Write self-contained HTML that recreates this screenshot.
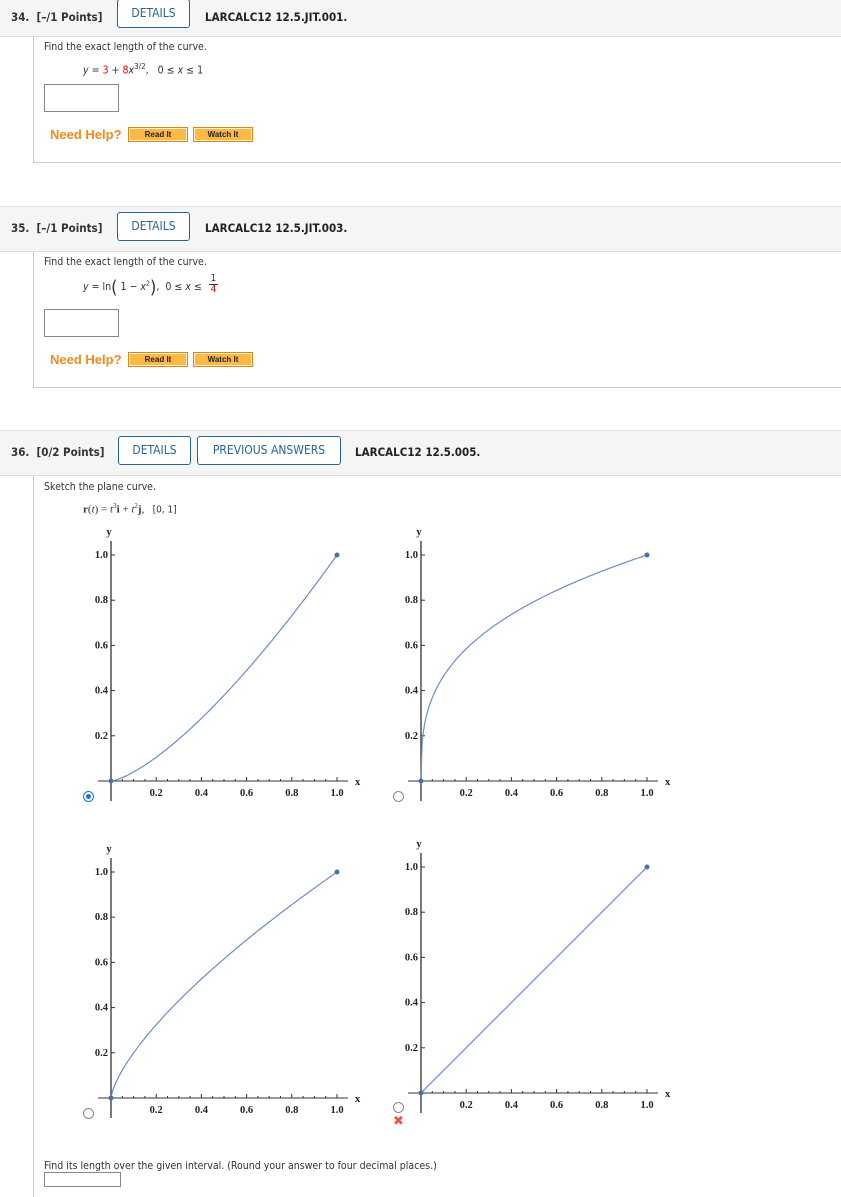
<!DOCTYPE html>
<html><head><meta charset="utf-8"><style>
body{margin:0;width:841px;height:1197px;background:#fff;font-family:"Liberation Sans","DejaVu Sans",sans-serif;position:relative;overflow:hidden;color:#333}
.a{position:absolute}
.hdr{position:absolute;left:0;width:841px;height:44px;background:#f5f5f5;border-bottom:1px solid #ddd;border-top:1px solid #e0e0e0}
.num{position:absolute;top:14px;left:11px;font-size:11.5px;font-weight:bold;color:#333;font-family:"DejaVu Sans Condensed","DejaVu Sans",sans-serif}
.btn{position:absolute;top:5px;height:27px;border:1px solid #2a6496;border-radius:3px;background:#fff;color:#2a6496;font-size:12px;line-height:27px;text-align:center;font-family:"DejaVu Sans Condensed","DejaVu Sans",sans-serif}
.code{position:absolute;top:14px;font-size:11.5px;font-weight:bold;color:#222;font-family:"DejaVu Sans Condensed","DejaVu Sans",sans-serif}
.box{position:absolute;left:33px;width:808px;border-left:1px solid #ccc;border-bottom:1px solid #ccc}
.t{position:absolute;font-size:10.5px;font-family:"DejaVu Sans Condensed","DejaVu Sans",sans-serif;color:#333}
.inp{position:absolute;width:73px;height:26px;border:1px solid #888;background:#fff}
.nh{position:absolute;font-size:13px;font-weight:bold;color:#f38b1a}
.ob{position:absolute;height:13px;width:58px;background:#fdb944;border:1px solid #d9871a;box-shadow:inset 0 0 0 1px #fff3d0;font-size:8px;font-weight:bold;color:#222;text-align:center;line-height:13px}
.rad{position:absolute;width:9px;height:9px;border:1px solid #888;border-radius:50%;background:#fff}
svg text{font-family:"Liberation Serif",serif;font-size:10.5px;fill:#222;font-weight:bold}
</style></head><body>

<div class="hdr" style="top:-1px;height:36px"><div class="num" style="top:10px">34.&nbsp; [–/1 Points]</div>
<div class="btn" style="left:117px;top:-1px;width:71px">DETAILS</div>
<div class="code" style="left:205px;top:10px">LARCALC12 12.5.JIT.001.</div></div>
<div class="box" style="top:36px;height:126px"></div>
<div class="t" style="left:44px;top:41px">Find the exact length of the curve.</div>
<div class="t" style="left:83px;top:62px"><i>y</i> = <span style="color:#e00">3</span> + <span style="color:#e00">8</span><i>x</i><sup style="font-size:8px">3/2</sup>, &nbsp;&nbsp;0 ≤ <i>x</i> ≤ 1</div>
<div class="inp" style="left:44px;top:84px"></div>
<div class="nh" style="left:50px;top:127px">Need Help?</div>
<div class="ob" style="left:128px;top:127px">Read It</div>
<div class="ob" style="left:193px;top:127px">Watch It</div>

<div class="hdr" style="top:206px"><div class="num">35.&nbsp; [–/1 Points]</div>
<div class="btn" style="left:117px;width:71px">DETAILS</div>
<div class="code" style="left:205px">LARCALC12 12.5.JIT.003.</div></div>
<div class="box" style="top:251px;height:136px"></div>
<div class="t" style="left:44px;top:256px">Find the exact length of the curve.</div>
<div class="t" style="left:83px;top:277px"><i>y</i> = ln<span style="font-size:18px;vertical-align:-3px">(</span> 1 − <i>x</i><sup style="font-size:7px">2</sup><span style="font-size:18px;vertical-align:-3px">)</span>, &nbsp;0 ≤ <i>x</i> ≤</div>
<div class="t" style="left:209px;top:274px;text-align:center;width:9px;line-height:10px;font-size:10px">1<div style="border-top:1px solid #333;height:0"></div><span style="color:#e00">4</span></div>
<div class="inp" style="left:44px;top:309px"></div>
<div class="nh" style="left:50px;top:352px">Need Help?</div>
<div class="ob" style="left:128px;top:352px">Read It</div>
<div class="ob" style="left:193px;top:352px">Watch It</div>

<div class="hdr" style="top:430px"><div class="num">36.&nbsp; [0/2 Points]</div>
<div class="btn" style="left:118px;width:71px">DETAILS</div>
<div class="btn" style="left:197px;width:142px">PREVIOUS ANSWERS</div>
<div class="code" style="left:355px">LARCALC12 12.5.005.</div></div>
<div class="box" style="top:475px;height:722px;border-bottom:none"></div>
<div class="t" style="left:44px;top:481px">Sketch the plane curve.</div>
<div class="t" style="left:83px;top:502px;font-family:'Liberation Serif',serif;font-size:11px"><b>r</b>(<i>t</i>) = <i>t</i><sup style="font-size:7px">3</sup><b>i</b> + <i>t</i><sup style="font-size:7px">2</sup><b>j</b>, &nbsp;&nbsp;<span style="font-family:'DejaVu Sans Condensed',sans-serif;font-size:10px">[0, 1]</span></div>

<svg class="a" style="left:0;top:0" width="841" height="1197" id="g"></svg>

<div class="rad" style="left:83px;top:791px;border-color:#1a73e8"><div style="position:absolute;left:2px;top:2px;width:5px;height:5px;border-radius:50%;background:#1a73e8"></div></div>
<div class="rad" style="left:393px;top:791px"></div>
<div class="rad" style="left:83px;top:1108px"></div>
<div class="rad" style="left:393px;top:1102px"></div>
<div class="a" style="left:393px;top:1113px;color:#f05050;font-size:13px;font-weight:bold">✖</div>

<div class="t" style="left:44px;top:1160px">Find its length over the given interval. (Round your answer to four decimal places.)</div>
<div class="a" style="left:44px;top:1172px;width:75px;height:13px;border:1px solid #888"></div>

<script>
var s='';
function graph(ox,oy,f){
 var u=226;
 s+='<line x1="'+(ox-13)+'" y1="'+oy+'" x2="'+(ox+237)+'" y2="'+oy+'" stroke="#333" stroke-width="1"/>';
 s+='<line x1="'+ox+'" y1="'+(oy+20)+'" x2="'+ox+'" y2="'+(oy-240)+'" stroke="#333" stroke-width="1.3"/>';
 for(var i=1;i<=20;i++){var x=ox+i*u/20;var h=(i%4==0)?4:2;s+='<line x1="'+x+'" y1="'+oy+'" x2="'+x+'" y2="'+(oy-h)+'" stroke="#333"/>';}
 for(var i=1;i<=5;i++){var y=oy-i*u/5;s+='<line x1="'+ox+'" y1="'+y+'" x2="'+(ox+4)+'" y2="'+y+'" stroke="#333"/>';
  s+='<text x="'+(ox-3)+'" y="'+(y+3)+'" text-anchor="end">'+(i/5).toFixed(1)+'</text>';
  s+='<text x="'+(ox+i*u/5)+'" y="'+(oy+15)+'" text-anchor="middle">'+(i/5).toFixed(1)+'</text>';}
 s+='<text x="'+(ox+244)+'" y="'+(oy+4)+'">x</text><text x="'+(ox-2)+'" y="'+(oy-246)+'" text-anchor="middle">y</text>';
 var d='M';for(var k=0;k<=200;k++){var x=k/200;d+=(ox+x*u).toFixed(1)+','+(oy-f(x)*u).toFixed(1)+' ';}
 s+='<path d="'+d+'" fill="none" stroke="#6b8cc7" stroke-width="1.2"/>';
 s+='<circle cx="'+ox+'" cy="'+oy+'" r="2.5" fill="#4a6fb0"/><circle cx="'+(ox+u)+'" cy="'+(oy-u)+'" r="2.5" fill="#4a6fb0"/>';
}
graph(111,781,function(x){return Math.pow(x,1.4)});
graph(421,781,function(x){return Math.pow(x,1/3)});
graph(111,1098,function(x){return Math.pow(x,0.7)});
graph(421,1093,function(x){return x});
document.getElementById('g').innerHTML=s;
</script>
</body></html>
